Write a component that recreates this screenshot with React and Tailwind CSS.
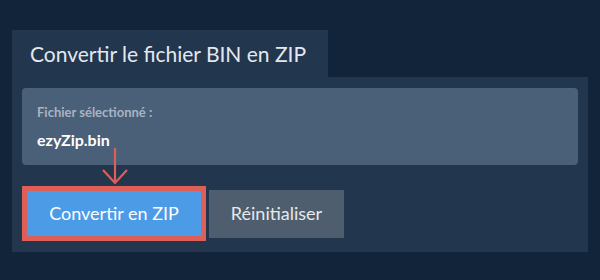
import React from 'react';

export default function App(){
  return (
    <div className="w-[600px] h-[280px] bg-[#11243a] pt-[30px] px-[12px]" style={{fontFamily: 'Lato, "Open Sans", sans-serif'}}>
      <div className="w-[316px] h-[47px] bg-[#22364d] flex items-center pl-[18px] text-[21px] text-[#e4e8ee]">
        Convertir le fichier BIN en ZIP
      </div>
      <div className="relative bg-[#22364d] px-[10px] pt-[11px] pb-[11px]">
        <div className="bg-[#4a5f78] rounded-[4px] h-[77px] px-[15px] pt-[15px]">
          <div className="text-[13px] font-bold text-[#a9b4c2] leading-[18px]">Fichier sélectionné :</div>
          <div className="text-[16px] font-bold text-white leading-[20px] mt-[9px]">ezyZip.bin</div>
        </div>
        <svg className="absolute left-[89px] top-[71px]" width="28" height="38" viewBox="0 0 28 38">
          <path d="M14 0 V35" stroke="#dd5f58" strokeWidth="2.2" fill="none" />
          <path d="M2 22 L14 35 L26 22" stroke="#dd5f58" strokeWidth="2.2" fill="none" />
        </svg>
        <div className="flex items-center gap-[3px] mt-[21px]">
          <div className="border-[5px] border-[#dd5f58]">
            <button className="bg-[#4b9be6] text-white text-[18px] w-[174px] h-[45px] flex items-center justify-center">Convertir en ZIP</button>
          </div>
          <button className="bg-[#4f5e6f] text-[#e6e8eb] text-[18px] w-[135px] h-[48px] flex items-center justify-center">Réinitialiser</button>
        </div>
      </div>
    </div>
  );
}
